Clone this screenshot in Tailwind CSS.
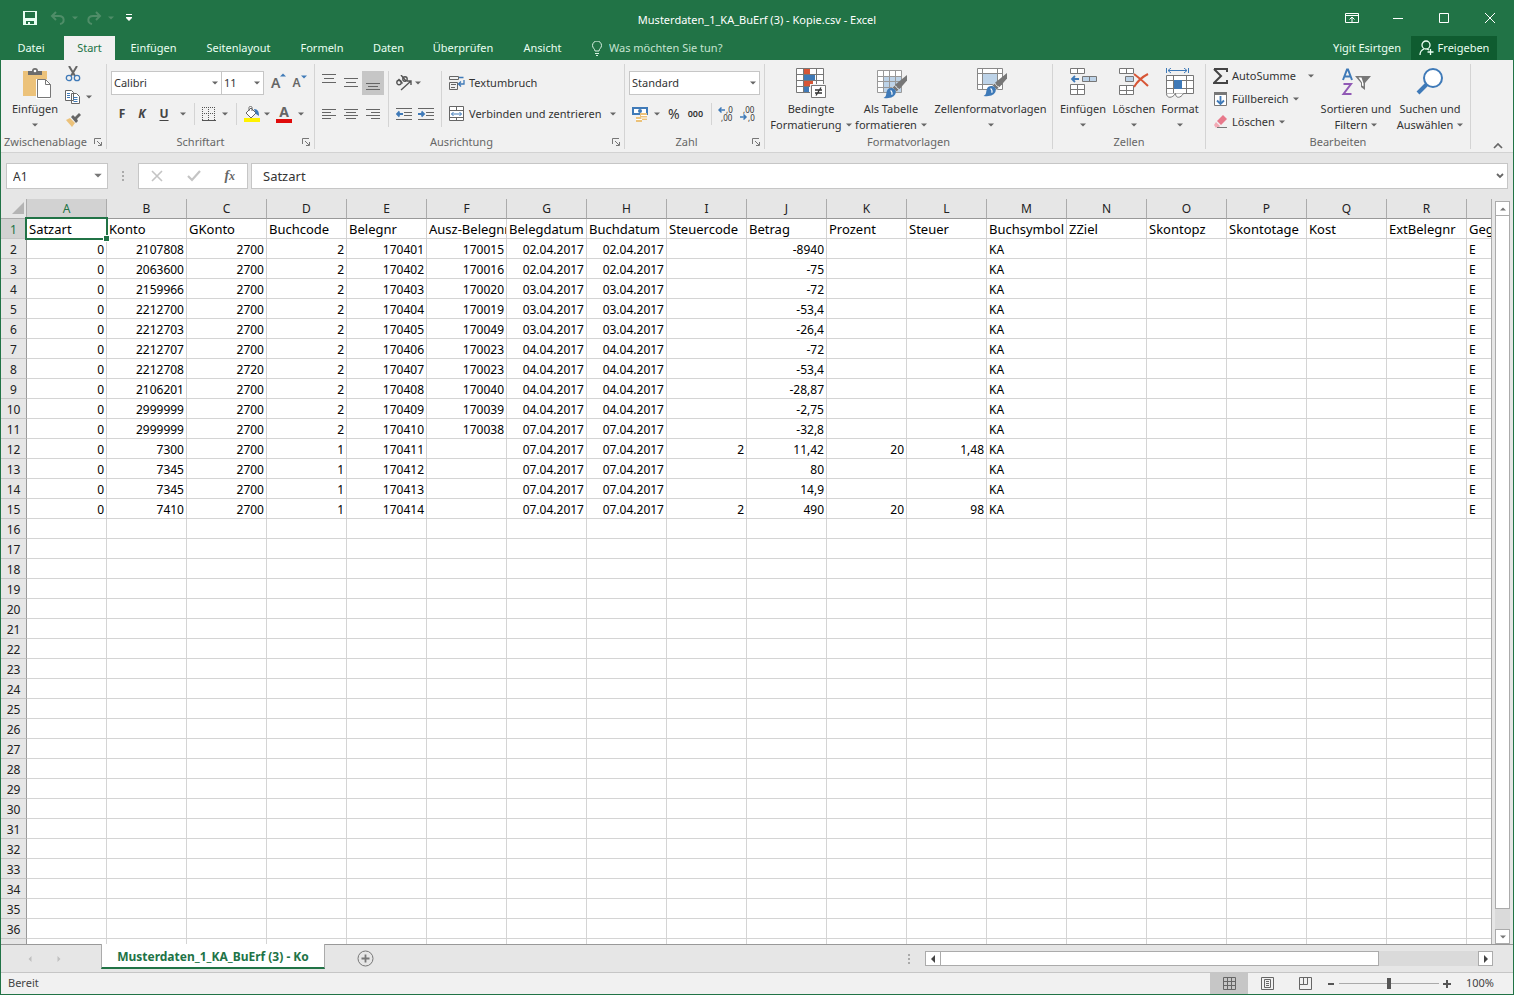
<!DOCTYPE html>
<html lang="de">
<head>
<meta charset="utf-8">
<title>Musterdaten_1_KA_BuErf (3) - Kopie.csv - Excel</title>
<script src="https://cdn.jsdelivr.net/npm/@tailwindcss/browser@4"></script>
</head>
<body class="h-screen overflow-hidden font-['Noto_Sans','Open_Sans',sans-serif] text-[11px] text-[#333]">
<svg class="hidden">
  <symbol id="caret" viewBox="0 0 6 4"><path d="M0 0.5h6L3 3.5z" fill="currentColor"/></symbol>
  <symbol id="launch" viewBox="0 0 8 8"><path d="M.5 6V.5H7M3 3l4 4M7.500 4v3.500H4" fill="none" stroke="#777"/></symbol>
  <symbol id="brush" viewBox="0 0 22 22"><path d="M22 0v5l-7 8-4-4z" fill="#777"/><path d="M10.500 9.500l4 4-2 2-4-4z" fill="#777" stroke="#f1f1f1" stroke-width=".6"/><path d="M7.500 12c3 0 5 2 4 5-1 3-5 5-11 4 3-1 2-3 3-6 .7-2 2-3 4-3z" fill="#3f7ab8"/><path d="M7 14c1 1 2 2 1 4" stroke="#fff" fill="none"/></symbol>
</svg>
<div class="flex h-full flex-col border-x border-b border-[#217346] bg-[#e6e6e6]">

  <!-- Title bar -->
  <header class="flex h-9 shrink-0 items-center bg-[#217346] text-white">
    <div class="flex w-[420px] items-center pl-[21px]">
      <button aria-label="Speichern"><svg class="size-4" viewBox="0 0 16 16"><path d="M1 1h14v14H1z" fill="#e8fff2"/><path d="M3 2h10v6H3zM4 11h8v3H4z" fill="#217346"/><path d="M6 12h2v2H6z" fill="#e8fff2"/></svg></button>
      <button aria-label="Rückgängig" class="ml-3 text-[#4f8d68]"><svg class="h-3.5 w-4" viewBox="0 0 16 14" fill="none" stroke="currentColor" stroke-width="2"><path d="M6 1L2 5l4 4M2 5h7c6 0 6 7 1 8"/></svg></button>
      <svg class="ml-1.5 h-1 w-1.5 text-[#4f8d68]"><use href="#caret"/></svg>
      <button aria-label="Wiederholen" class="ml-2 text-[#4f8d68]"><svg class="h-3.5 w-4" viewBox="0 0 16 14" fill="none" stroke="currentColor" stroke-width="2"><path d="M10 1l4 4-4 4M14 5H7c-6 0-6 7-1 8"/></svg></button>
      <svg class="ml-1.5 h-1 w-1.5 text-[#4f8d68]"><use href="#caret"/></svg>
      <button aria-label="Symbolleiste anpassen" class="ml-3"><svg class="h-2 w-1.5" viewBox="0 0 6 8" fill="#fff"><path d="M0 0h6v1H0zM0 3h6v1L3 7 0 4z"/></svg></button>
    </div>
    <h1 class="flex-1 pt-1 text-center whitespace-nowrap">Musterdaten_1_KA_BuErf (3) - Kopie.csv - Excel</h1>
    <div class="flex w-[420px] items-center justify-end gap-8 pr-4">
      <button aria-label="Menüband-Anzeigeoptionen"><svg class="h-3 w-3.5" viewBox="0 0 14 12" fill="none" stroke="#fff"><path d="M.5 1.500h13v9H.5zM.5 3.500h13M7 10V5M4.500 7.500L7 5l2.500 2.500"/></svg></button>
      <button aria-label="Minimieren"><svg class="h-3 w-3.5" viewBox="0 0 14 12"><path d="M2 6.500h10" stroke="#fff"/></svg></button>
      <button aria-label="Maximieren"><svg class="h-3 w-3.5" viewBox="0 0 14 12"><path d="M2.500 1.500h9v9h-9z" stroke="#fff" fill="none"/></svg></button>
      <button aria-label="Schließen"><svg class="h-3 w-3.5" viewBox="0 0 14 12"><path d="M2 1l10 10M12 1L2 11" stroke="#fff"/></svg></button>
    </div>
  </header>

  <!-- Ribbon tabs -->
  <nav class="flex h-6 shrink-0 bg-[#217346] text-[#eafff2]">
    <button class="mr-[3px] w-[60px]">Datei</button>
    <button class="w-[51px] bg-[#f1f1f1] text-[#217346]">Start</button>
    <button class="w-[77px]">Einfügen</button>
    <button class="w-[93px]">Seitenlayout</button>
    <button class="w-[74px]">Formeln</button>
    <button class="w-[59px]">Daten</button>
    <button class="w-[90px]">Überprüfen</button>
    <button class="w-[69px]">Ansicht</button>
    <label class="ml-3.5 flex items-center gap-1.5">
      <svg class="h-[15px] w-3" viewBox="0 0 12 15" fill="none" stroke="#d9f2e3"><path d="M4 10c0-2-2.500-3-2.500-5.500a4.500 4.500 0 019 0C10.500 7 8 8 8 10zM4 12.500h4M5 14.500h2"/></svg>
      <input class="w-40 bg-transparent outline-none placeholder:text-[#c5e3d1]" placeholder="Was möchten Sie tun?" aria-label="Was möchten Sie tun?">
    </label>
    <span class="ml-auto flex items-center pr-2.5">Yigit Esirtgen</span>
    <button class="mr-4 flex w-[86px] items-center justify-center gap-1 bg-[#0f5c30]"><svg class="h-4 w-[15px]" viewBox="0 0 15 16" fill="none" stroke="#eafff2" stroke-width="1.300"><circle cx="7" cy="5" r="4"/><path d="M1 15c0-3 1.500-5 4-6M8 9l2 1M11.500 9v6M8.500 12h6"/></svg>Freigeben</button>
  </nav>

  <!-- Ribbon -->
  <section class="flex h-[93px] shrink-0 border-b border-[#d2d2d2] bg-[#f1f1f1] pt-1 pb-[3px] text-[#333]">
    <!-- Zwischenablage -->
    <div class="flex w-[106px] shrink-0 flex-col border-r border-[#d4d4d4]">
      <div class="flex flex-1">
        <button class="flex w-[68px] flex-col items-center pt-1 leading-4">
          <svg class="ml-1 h-[31px] w-7" viewBox="0 0 28 31"><path d="M0 3h24v25H0z" fill="#ecc27a"/><path d="M5 3h4a3 3 0 016 0h4v4H5z" fill="#6d6d6d"/><circle cx="12" cy="3" r="1.300" fill="#fff"/><path d="M13 11h10l5 5v15H13z" fill="#fff"/><path d="M14.500 11.500h8l5 5v13h-13zM22.500 11.500v5h5" fill="#fff" stroke="#777"/></svg>
          <span class="mt-0.5">Einfügen</span>
          <svg class="mt-1.5 h-1 w-1.5 text-[#666]"><use href="#caret"/></svg>
        </button>
        <div class="flex flex-col gap-2 pt-0.5 -ml-1">
          <button aria-label="Ausschneiden"><svg class="size-4" viewBox="0 0 16 16" fill="none"><path d="M4 0l6 10M12 0L6 10" stroke="#666" stroke-width="2"/><circle cx="4" cy="12" r="2.700" stroke="#3f7ab8" stroke-width="1.300"/><circle cx="12" cy="12" r="2.700" stroke="#3f7ab8" stroke-width="1.300"/></svg></button>
          <button aria-label="Kopieren" class="flex items-center gap-[5px]"><svg class="h-3.5 w-4" viewBox="0 0 16 14" fill="#fff" stroke="#666"><path d="M.5.5h6l2 2v8h-8zM6.500 3.500h5l3 3v7h-8z"/><path d="M2 3.500h3M2 5.500h3M2 7.500h3M8.500 7.500h4M8.500 9.500h4M8.500 11.500h4" stroke="#3f7ab8"/></svg><svg class="h-1 w-1.5 text-[#666]"><use href="#caret"/></svg></button>
          <button aria-label="Format übertragen"><svg class="size-4" viewBox="0 0 16 16"><path d="M1 8l4-2 5 5-3 4z" fill="#ecc27a"/><path d="M6 5l2-2 2 2 4-4 2 2-4 4 1 2-2 2z" fill="#666"/></svg></button>
        </div>
      </div>
      <div class="flex h-3.5 items-center justify-between gap-1 pr-1 pl-[3px] text-[#666]"><span>Zwischenablage</span><button aria-label="Dialog Zwischenablage"><svg class="size-2"><use href="#launch"/></svg></button></div>
    </div>
    <!-- Schriftart -->
    <div class="flex w-[208px] shrink-0 flex-col border-r border-[#d4d4d4]">
      <div class="flex flex-1 flex-col gap-[7px] pt-[7px] pl-1">
        <div class="flex h-6 items-center">
          <div class="relative h-6 w-[111px]"><select aria-label="Schriftart" class="h-full w-full appearance-none border border-[#c6c6c6] bg-white px-0.5"><option>Calibri</option></select><svg class="pointer-events-none absolute top-2.5 right-1 h-1 w-1.5 text-[#666]"><use href="#caret"/></svg></div>
          <div class="relative h-6 w-[42px]"><select aria-label="Schriftgrad" class="h-full w-full appearance-none border border-l-0 border-[#c6c6c6] bg-white px-0.5"><option>11</option></select><svg class="pointer-events-none absolute top-2.5 right-1 h-1 w-1.5 text-[#666]"><use href="#caret"/></svg></div>
          <button aria-label="Schriftgrad vergrößern" class="ml-[7px] flex text-sm font-semibold text-[#666]">A<svg class="h-1 w-1.5 rotate-180 text-[#3f7ab8]"><use href="#caret"/></svg></button>
          <button aria-label="Schriftgrad verkleinern" class="ml-1.5 flex text-xs font-semibold text-[#666]">A<svg class="h-1 w-1.5 text-[#3f7ab8]"><use href="#caret"/></svg></button>
        </div>
        <div class="flex h-6 items-center text-xs text-[#444]">
          <button class="ml-[3px] w-4 font-bold">F</button>
          <button class="ml-1 w-4 font-bold italic">K</button>
          <button class="ml-1.5 w-4 font-bold underline underline-offset-2">U</button>
          <svg class="ml-2 h-1 w-1.5 text-[#666]"><use href="#caret"/></svg>
          <span class="ml-2 h-[22px] w-px bg-[#d4d4d4]"></span>
          <button aria-label="Rahmenlinien" class="ml-[7px]"><svg class="size-3.5" viewBox="0 0 14 14" fill="none" stroke="#555"><path d="M0 .5h14M0 6.500h14M.5 0v13M6.500 0v13M12.500 0v13" stroke-dasharray="1 1"/><path d="M0 13.500h14"/></svg></button>
          <svg class="ml-1.5 h-1 w-1.5 text-[#666]"><use href="#caret"/></svg>
          <span class="ml-2 h-[22px] w-px bg-[#d4d4d4]"></span>
          <button aria-label="Füllfarbe" class="ml-[7px]"><svg class="size-4" viewBox="0 0 16 16"><path d="M0 12h16v4H0z" fill="#fff200"/><path d="M7 2l5 5-5 5-5-5zM5 5V1.500C5 0 8 0 8 1.500V5" fill="#fff" stroke="#666"/><path d="M10 3c4 0 5 3 5 7l-3-2z" fill="#3f7ab8"/></svg></button>
          <svg class="ml-1 h-1 w-1.5 text-[#666]"><use href="#caret"/></svg>
          <button aria-label="Schriftfarbe" class="ml-1.5 h-[18px] w-4 border-b-4 border-[#e00b0b] text-sm leading-[14px] font-bold text-[#666]">A</button>
          <svg class="ml-1.5 h-1 w-1.5 text-[#666]"><use href="#caret"/></svg>
        </div>
      </div>
      <div class="flex h-3.5 items-center pr-1 text-[#666]"><span class="flex-1 pr-2 text-center">Schriftart</span><button aria-label="Dialog Schriftart"><svg class="size-2"><use href="#launch"/></svg></button></div>
    </div>
    <!-- Ausrichtung -->
    <div class="flex w-[310px] shrink-0 flex-col border-r border-[#d4d4d4]">
      <div class="flex flex-1 pt-[7px]">
        <div class="mb-2 flex w-[74px] flex-col gap-[7px] border-r border-[#d4d4d4] pl-[3px]">
          <div class="flex h-6">
            <button aria-label="Oben ausrichten" class="flex w-[22px] justify-center"><svg class="h-[22px] w-3.5" viewBox="0 0 14 22" stroke="#666"><path d="M0 3.500h14M2 7.500h10M0 11.500h14"/></svg></button>
            <button aria-label="Zentriert ausrichten" class="flex w-[22px] justify-center"><svg class="h-[22px] w-3.5" viewBox="0 0 14 22" stroke="#666"><path d="M0 7.500h14M2 11.500h10M0 15.500h14"/></svg></button>
            <button aria-label="Unten ausrichten" class="flex w-[22px] justify-center bg-[#c6c6c6]"><svg class="h-[22px] w-3.5" viewBox="0 0 14 22" stroke="#666"><path d="M0 12.500h14M2 15.500h10M0 18.500h14"/></svg></button>
          </div>
          <div class="flex h-6 items-center">
            <button aria-label="Linksbündig" class="flex w-[22px] justify-center"><svg class="h-3 w-3.5" viewBox="0 0 14 12" stroke="#666"><path d="M0 1.500h14M0 4.500h9M0 7.500h14M0 10.500h9"/></svg></button>
            <button aria-label="Zentriert" class="flex w-[22px] justify-center"><svg class="h-3 w-3.5" viewBox="0 0 14 12" stroke="#666"><path d="M0 1.500h14M2 4.500h10M0 7.500h14M2 10.500h10"/></svg></button>
            <button aria-label="Rechtsbündig" class="flex w-[22px] justify-center"><svg class="h-3 w-3.5" viewBox="0 0 14 12" stroke="#666"><path d="M0 1.500h14M5 4.500h9M0 7.500h14M5 10.500h9"/></svg></button>
          </div>
        </div>
        <div class="mb-2 flex w-[53px] flex-col gap-[7px] border-r border-[#d4d4d4] pl-[7px]">
          <button aria-label="Ausrichtung" class="flex h-6 items-center gap-[3px]"><svg class="size-4" viewBox="0 0 16 16" fill="none" stroke="#555" stroke-width="1.400"><circle cx="3" cy="7.500" r="2.200"/><path d="M2.500 4l4 4.500M5 0l5 6"/><circle cx="9" cy="4" r="2.200"/><path d="M5 15l10-9M15 10V6h-4"/></svg><svg class="h-1 w-1.5 text-[#666]"><use href="#caret"/></svg></button>
          <div class="flex h-6 items-center gap-1.5">
            <button aria-label="Einzug verkleinern"><svg class="h-3 w-4" viewBox="0 0 16 12" stroke="#666" fill="none"><path d="M0 .5h16M8 4.500h8M8 7.500h8M0 11.500h16"/><path d="M1 6h6M3.500 3.500L1 6l2.500 2.500" stroke="#3f7ab8" stroke-width="1.800"/></svg></button>
            <button aria-label="Einzug vergrößern"><svg class="h-3 w-4" viewBox="0 0 16 12" stroke="#666" fill="none"><path d="M0 .5h16M8 4.500h8M8 7.500h8M0 11.500h16"/><path d="M0 6h6M3.500 3.500L6 6 3.500 8.500" stroke="#3f7ab8" stroke-width="1.800"/></svg></button>
          </div>
        </div>
        <div class="flex flex-1 flex-col gap-[7px] pl-[7px]">
          <button class="flex h-6 items-center gap-1"><svg class="size-4" viewBox="0 0 16 16" fill="none" stroke="#666"><path d="M.5 1.500h9v3h-9zM.5 7.500h8v7h-8zM2 9.500h5M2 12.500h4"/><path d="M10 2.500h4.500M15 5v4h-5M12 6.500L9.500 9l2.500 2.500" stroke="#3f7ab8" stroke-width="1.300"/></svg>Textumbruch</button>
          <button class="flex h-6 items-center gap-1 whitespace-nowrap"><svg class="size-4 shrink-0" viewBox="0 0 16 16" fill="#fff" stroke="#666"><path d="M.5.5h14v14H.5zM.5 4.500h14M.5 11.500h14M7.500.5v4M7.500 11.500v3"/><path d="M2.500 8h10M4.500 6l-2 2 2 2M10.500 6l2 2-2 2" fill="none" stroke="#3f7ab8"/></svg><span class="w-[137px] text-left">Verbinden und zentrieren</span><svg class="h-1 w-1.5 text-[#666]"><use href="#caret"/></svg></button>
        </div>
      </div>
      <div class="flex h-3.5 items-center pr-1 text-[#666]"><span class="flex-1 pr-1 text-center">Ausrichtung</span><button aria-label="Dialog Ausrichtung"><svg class="size-2"><use href="#launch"/></svg></button></div>
    </div>
    <!-- Zahl -->
    <div class="flex w-[140px] shrink-0 flex-col border-r border-[#d4d4d4]">
      <div class="flex flex-1 flex-col gap-[7px] pt-[7px] pl-1">
        <div class="relative h-6 w-[131px]"><select aria-label="Zahlenformat" class="h-full w-full appearance-none border border-[#c6c6c6] bg-white px-0.5"><option>Standard</option></select><svg class="pointer-events-none absolute top-2.5 right-1 h-1 w-1.5 text-[#666]"><use href="#caret"/></svg></div>
        <div class="flex h-6 items-center">
          <button aria-label="Buchhaltungszahlenformat" class="ml-[3px]"><svg class="size-4" viewBox="0 0 16 16"><path d="M0 1h16v8H0z" fill="#3f7ab8"/><path d="M2 3h12v4H2z" fill="#fff"/><circle cx="8" cy="5" r="2" fill="#3f7ab8"/><path d="M8 7h7v7H8zM4 11h6v5H4z" fill="#ecc27a"/><path d="M9 9.500h6M9 12h6M4 13.500h6" stroke="#fff"/></svg></button>
          <svg class="ml-1.5 h-1 w-1.5 text-[#666]"><use href="#caret"/></svg>
          <button aria-label="Prozentformat" class="ml-2 text-sm">%</button>
          <button aria-label="1.000er-Trennzeichen" class="ml-2 text-[9px] font-semibold">000</button>
          <span class="ml-2 h-[22px] w-px bg-[#d4d4d4]"></span>
          <button aria-label="Dezimalstelle hinzufügen" class="ml-1.5"><svg class="size-4" viewBox="0 0 16 16"><path d="M1 4h6M3.500 1.500L1 4l2.500 2.500" stroke="#3f7ab8" fill="none" stroke-width="1.500"/><text x="8" y="7" font-size="8" fill="#333">,0</text><text x="3" y="15" font-size="8" fill="#333">,00</text></svg></button>
          <button aria-label="Dezimalstelle entfernen" class="ml-1.5"><svg class="size-4" viewBox="0 0 16 16"><path d="M0 11h6M3.500 8.500L6 11l-2.500 2.500" stroke="#3f7ab8" fill="none" stroke-width="1.500"/><text x="3" y="7" font-size="8" fill="#333">,00</text><text x="8" y="15" font-size="8" fill="#333">,0</text></svg></button>
        </div>
      </div>
      <div class="flex h-3.5 items-center pr-1 text-[#666]"><span class="flex-1 pr-1 text-center">Zahl</span><button aria-label="Dialog Zahl"><svg class="size-2"><use href="#launch"/></svg></button></div>
    </div>
    <!-- Formatvorlagen -->
    <div class="flex w-[288px] shrink-0 flex-col border-r border-[#d4d4d4]">
      <div class="flex flex-1 pt-1 pl-1 leading-4 whitespace-nowrap">
        <button class="flex w-[84px] flex-col items-center">
          <svg class="h-[31px] w-8" viewBox="0 0 32 31"><path d="M1.500.5h27v24h-27z" fill="#fff"/><path d="M9 1h6v5H9zM9 13h9v5H9z" fill="#d75636"/><path d="M9 7h11v5H9zM9 19h5v5H9z" fill="#3f7ab8"/><path d="M1.500.5h27v24h-27zM1.500 6.500h27M1.500 12.500h27M1.500 18.500h27M8.500.5v24M21.500.5v24" fill="none" stroke="#777"/><path d="M15 16h17v15H15z" fill="#f1f1f1"/><path d="M16.500 17.500h14v12h-14z" fill="#fff" stroke="#777"/><path d="M20 22h7M20 25h7M26 19.500l-5 8" stroke="#333" stroke-width="1.300"/></svg>
          <span class="mt-0.5">Bedingte</span><span class="flex items-center gap-1">Formatierung<svg class="h-1 w-1.5 text-[#666]"><use href="#caret"/></svg></span>
        </button>
        <button class="flex w-[76px] flex-col items-center">
          <svg class="h-[31px] w-8" viewBox="0 0 32 31"><path d="M2.500 2.500h24v22h-24z" fill="#fff"/><path d="M8.500 8.500h18v16h-18z" fill="#bdd3e8"/><path d="M2.500 2.500h24v22h-24zM2.500 8.500h24M2.500 13.500h24M2.500 19.500h24M8.500 2.500v22M14.500 2.500v22M20.500 2.500v22" fill="none" stroke="#999"/><svg x="8" y="7" width="24" height="24"><use href="#brush"/></svg></svg>
          <span class="mt-0.5">Als Tabelle</span><span class="flex items-center gap-1">formatieren<svg class="h-1 w-1.5 text-[#666]"><use href="#caret"/></svg></span>
        </button>
        <button class="flex flex-1 flex-col items-center">
          <svg class="h-[31px] w-8" viewBox="0 0 32 31"><path d="M2.500.5h25v21h-25z" fill="#fff"/><path d="M7.500 5.500h15v11h-15z" fill="#bdd3e8"/><path d="M2.500.5h25v21h-25zM7.500.5v21M22.500.5v21M2.500 5.500h25M2.500 16.500h25" fill="none" stroke="#888"/><svg x="8" y="5" width="24" height="24"><use href="#brush"/></svg></svg>
          <span class="mt-0.5">Zellenformatvorlagen</span><svg class="mt-1.5 h-1 w-1.5 text-[#666]"><use href="#caret"/></svg>
        </button>
      </div>
      <div class="h-3.5 text-center leading-[14px] text-[#666]">Formatvorlagen</div>
    </div>
    <!-- Zellen -->
    <div class="flex w-[153px] shrink-0 flex-col border-r border-[#d4d4d4]">
      <div class="flex flex-1 pt-1 pl-1 leading-4">
        <button class="flex w-[52px] flex-col items-center"><svg class="h-[31px] w-7" viewBox="0 0 28 31" fill="#fff" stroke="#777"><path d="M1.500.5h14v5h-14zM8.500.5v5M1.500 16.500h14v10h-14zM8.500 16.500v10M1.500 21.500h14"/><path d="M13.500 8.500h14v5h-14zM20.500 8.500v5" fill="#bdd3e8"/><path d="M3 11h7M6 8l-3 3 3 3" fill="none" stroke="#3f7ab8" stroke-width="1.800"/></svg><span class="mt-0.5">Einfügen</span><svg class="mt-1.5 h-1 w-1.5 text-[#666]"><use href="#caret"/></svg></button>
        <button class="flex w-[50px] flex-col items-center"><svg class="h-[31px] w-[30px]" viewBox="0 0 30 31" fill="#fff" stroke="#777"><path d="M.5.5h14v5H.5zM7.500.5v5M.5 17.500h14v9H.5zM7.500 17.500v9M.5 22.500h14"/><path d="M6.500 8.500h8v5h-8z" fill="#bdd3e8"/><path d="M15 6c4 3 9 7 14 12M29 6c-6 3-11 8-14 13" fill="none" stroke="#d75636" stroke-width="2"/></svg><span class="mt-0.5">Löschen</span><svg class="mt-1.5 h-1 w-1.5 text-[#666]"><use href="#caret"/></svg></button>
        <button class="flex w-[42px] flex-col items-center"><svg class="h-[31px] w-[30px]" viewBox="0 0 30 31" fill="#fff" stroke="#777"><path d="M1.500 7.500h27v18h-27zM8.500 7.500v18M21.500 7.500v18M1.500 12.500h27M1.500 20.500h27"/><path d="M1.500 25.500c0 5 6 5 9 0c0 5 5 5 8 0" fill="#fff"/><path d="M9 12h8v9H9z" fill="#3f7ab8" stroke="none"/><path d="M1.500 0v5M23.500 0v5M3 2.500h19M6 0L3 2.500 6 5M19 0l3 2.500L19 5" fill="none" stroke="#3f7ab8"/></svg><span class="mt-0.5">Format</span><svg class="mt-1.5 h-1 w-1.5 text-[#666]"><use href="#caret"/></svg></button>
      </div>
      <div class="h-3.5 text-center leading-[14px] text-[#666]">Zellen</div>
    </div>
    <!-- Bearbeiten -->
    <div class="flex w-[265px] shrink-0 flex-col border-r border-[#d4d4d4]">
      <div class="flex flex-1 leading-4 whitespace-nowrap">
        <div class="flex w-[111px] flex-col pl-[7px]">
          <button class="flex h-[23px] items-center gap-1"><svg class="h-4 w-[15px]" viewBox="0 0 15 16"><path d="M1 1h13v3M14 12v3H1l7-7-7-7" fill="none" stroke="#444" stroke-width="2"/></svg>AutoSumme<svg class="ml-2 h-1 w-1.5 text-[#666]"><use href="#caret"/></svg></button>
          <button class="flex h-[23px] items-center gap-1"><svg class="h-4 w-[15px]" viewBox="0 0 15 16"><path d="M1.500 2.500h12v12h-12z" fill="#fff" stroke="#777"/><path d="M1 1h13v3H1z" fill="#777"/><path d="M7.500 5v8M4 9.500L7.500 13 11 9.500" fill="none" stroke="#3f7ab8" stroke-width="1.800"/></svg>Füllbereich<svg class="h-1 w-1.5 text-[#666]"><use href="#caret"/></svg></button>
          <button class="flex h-[23px] items-center gap-1"><svg class="h-4 w-[15px]" viewBox="0 0 15 16"><path d="M4 7l6-6 4 4-6 6z" fill="#e8798b"/><path d="M3 8l4 4-1.500 1.500h-3L1 11z" fill="#f3a9b4"/><path d="M4 13.500h10" stroke="#777"/></svg>Löschen<svg class="h-1 w-1.5 text-[#666]"><use href="#caret"/></svg></button>
        </div>
        <button class="flex w-[78px] flex-col items-center pt-1"><svg class="h-[31px] w-[30px]" viewBox="0 0 30 31"><path d="M2 12L6 1.500h1L11 12M3.500 8.500h6" fill="none" stroke="#3f7ab8" stroke-width="2"/><path d="M2.500 16H10L2.500 26h8" fill="none" stroke="#9159b5" stroke-width="2"/><path d="M14 8h16l-6 7v7l-4-3v-4z" fill="#777"/><path d="M17.500 9.500h3l2 6v3l-1.500-1v-3z" fill="#fff"/></svg><span class="mt-0.5">Sortieren und</span><span class="flex items-center gap-1">Filtern<svg class="h-1 w-1.5 text-[#666]"><use href="#caret"/></svg></span></button>
        <button class="flex w-[70px] flex-col items-center pt-1"><svg class="h-[31px] w-7" viewBox="0 0 28 31"><path d="M11 16L2 25" stroke="#3f7ab8" stroke-width="4"/><circle cx="17" cy="10" r="9" fill="#fff" stroke="#3f7ab8" stroke-width="2"/></svg><span class="mt-0.5">Suchen und</span><span class="flex items-center gap-1">Auswählen<svg class="h-1 w-1.5 text-[#666]"><use href="#caret"/></svg></span></button>
      </div>
      <div class="h-3.5 text-center leading-[14px] text-[#666]">Bearbeiten</div>
    </div>
    <button aria-label="Menüband reduzieren" class="mt-auto ml-auto pr-2.5"><svg class="h-1.5 w-2.5" viewBox="0 0 10 6"><path d="M1 5l4-4 4 4" fill="none" stroke="#666" stroke-width="1.700"/></svg></button>
  </section>

  <!-- Formula bar -->
  <section class="flex h-[46px] shrink-0 items-start pt-2.5 pr-[5px] pl-[5px] text-xs">
    <div class="relative h-[26px] w-[102px]"><input aria-label="Namenfeld" value="A1" class="h-full w-full border border-[#c6c6c6] bg-white px-1.5 outline-none"><svg class="pointer-events-none absolute top-2.5 right-1.5 h-[5px] w-2 text-[#777]"><use href="#caret"/></svg></div>
    <svg class="ml-3.5 h-[26px] w-0.5" viewBox="0 0 2 26" fill="#aaa"><path d="M0 8h2v2H0zM0 12h2v2H0zM0 16h2v2H0z"/></svg>
    <div class="ml-3.5 flex h-[26px] w-[110px] items-center justify-around border border-[#c6c6c6] bg-white">
      <button aria-label="Abbrechen"><svg class="size-3" viewBox="0 0 12 12"><path d="M1 1l10 10M11 1L1 11" stroke="#c4c4c4" stroke-width="1.600"/></svg></button>
      <button aria-label="Eingeben"><svg class="h-3 w-3.5" viewBox="0 0 14 12"><path d="M1 6l4 4 8-9" stroke="#c4c4c4" stroke-width="2.200" fill="none"/></svg></button>
      <button aria-label="Funktion einfügen" class="font-['Liberation_Serif',serif] text-sm leading-4 font-bold text-[#666] italic">f<span class="text-xs">x</span></button>
    </div>
    <div class="relative ml-[3px] h-[26px] flex-1"><input aria-label="Bearbeitungsleiste" value="Satzart" class="h-full w-full border border-[#c6c6c6] bg-white px-[11px] text-[13px] outline-none"><svg class="pointer-events-none absolute top-2.5 right-1 h-1.5 w-2" viewBox="0 0 8 6"><path d="M1 1l3 3 3-3" fill="none" stroke="#666" stroke-width="1.800"/></svg></div>
  </section>

  <!-- Worksheet -->
  <main class="flex min-h-0 flex-1">
    <div class="min-w-0 flex-1 overflow-hidden border-r border-[#ababab]">
      <table id="sheet" class="w-[1546px] table-fixed border-separate border-spacing-0 bg-white text-xs leading-[19px] text-black"></table>
    </div>
    <div class="flex w-[21px] flex-col items-center pt-0.5">
      <button aria-label="Nach oben" class="flex size-[15px] items-center justify-center border border-[#ababab] bg-white text-[#777]"><svg class="h-1 w-1.5 rotate-180"><use href="#caret"/></svg></button>
      <div class="w-[15px] flex-1 border-x border-b border-[#ababab] bg-white"></div>
      <div class="h-5 w-[15px] bg-[#dadada]"></div>
      <button aria-label="Nach unten" class="flex size-[15px] items-center justify-center border border-[#ababab] bg-white text-[#777]"><svg class="h-1 w-1.5"><use href="#caret"/></svg></button>
    </div>
  </main>

  <!-- Sheet tabs -->
  <section class="flex h-[29px] shrink-0 items-start border-b border-[#c6c6c6]">
    <div class="flex h-7 w-[100px] items-center gap-[23px] border-t border-[#999] pl-[26px] text-[#c0c0c0]">
      <button aria-label="Vorheriges Blatt"><svg class="h-1 w-1.5 rotate-90"><use href="#caret"/></svg></button>
      <button aria-label="Nächstes Blatt"><svg class="h-1 w-1.5 -rotate-90"><use href="#caret"/></svg></button>
    </div>
    <button class="h-[25px] w-[224px] border-x border-b-2 border-x-[#ababab] border-b-[#217346] bg-white pt-0.5 text-xs font-bold whitespace-nowrap text-[#217346]">Musterdaten_1_KA_BuErf (3) - Ko</button>
    <div class="flex h-7 flex-1 items-center border-t border-[#999]">
      <button aria-label="Neues Blatt" class="ml-8"><svg class="size-[17px]" viewBox="0 0 17 17" fill="none" stroke="#777"><circle cx="8.500" cy="8.500" r="7.500"/><path d="M8.500 4.500v8M4.500 8.500h8" stroke-width="1.800"/></svg></button>
      <svg class="ml-auto h-3 w-0.5" viewBox="0 0 2 12" fill="#aaa"><path d="M0 1h2v2H0zM0 5h2v2H0zM0 9h2v2H0z"/></svg>
      <div class="ml-[15px] flex h-[15px] w-[568px]">
        <button aria-label="Nach links" class="flex w-4 items-center justify-center border border-[#ababab] bg-white text-[#444]"><svg class="h-1.5 w-2 rotate-90"><use href="#caret"/></svg></button>
        <div class="w-[438px] border-y border-r border-[#ababab] bg-white"></div>
        <div class="flex-1 bg-[#dadada]"></div>
        <button aria-label="Nach rechts" class="flex w-[15px] items-center justify-center border border-[#ababab] bg-white text-[#444]"><svg class="h-1.5 w-2 -rotate-90"><use href="#caret"/></svg></button>
      </div>
      <span class="w-5"></span>
    </div>
  </section>

  <!-- Status bar -->
  <footer class="flex h-[21px] shrink-0 items-center bg-[#f1f1f1] text-[#444]">
    <span class="pl-[7px]">Bereit</span>
    <button aria-label="Normal" class="ml-auto flex h-full w-[38px] items-center justify-center bg-[#c6c6c6]"><svg class="size-[13px]" viewBox="0 0 13 13" fill="none" stroke="#666"><path d="M.5.5h12v12H.5zM4.500.5v12M8.500.5v12M.5 4.500h12M.5 8.500h12"/></svg></button>
    <button aria-label="Seitenlayout" class="flex h-full w-[38px] items-center justify-center"><svg class="size-[13px]" viewBox="0 0 13 13" fill="none" stroke="#666"><path d="M.5.5h12v12H.5zM3.500 2.500h6v8h-6zM5 4.500h3M5 6.500h3M5 8.500h3"/></svg></button>
    <button aria-label="Umbruchvorschau" class="flex h-full w-[38px] items-center justify-center"><svg class="size-[13px]" viewBox="0 0 13 13" fill="none" stroke="#666"><path d="M.5.5h12v12H.5zM4.500.5v7M8.500.5v7h-8"/></svg></button>
    <button aria-label="Verkleinern" class="ml-1 h-0.5 w-1.5 bg-[#555]"></button>
    <input type="range" aria-label="Zoom" value="50" class="ml-[5px] h-3 w-[100px] appearance-none bg-transparent [&::-webkit-slider-runnable-track]:h-px [&::-webkit-slider-runnable-track]:bg-[#aaa] [&::-webkit-slider-thumb]:-mt-[5px] [&::-webkit-slider-thumb]:h-[11px] [&::-webkit-slider-thumb]:w-1 [&::-webkit-slider-thumb]:appearance-none [&::-webkit-slider-thumb]:bg-[#555]">
    <button aria-label="Vergrößern" class="ml-1"><svg class="size-2" viewBox="0 0 8 8"><path d="M0 4h8M4 0v8" stroke="#555" stroke-width="2"/></svg></button>
    <span class="w-[62px] pr-[19px] text-right">100%</span>
  </footer>
</div>

<script>
const names = ['Satzart','Konto','GKonto','Buchcode','Belegnr','Ausz-Belegnr','Belegdatum','Buchdatum','Steuercode','Betrag','Prozent','Steuer','Buchsymbol','ZZiel','Skontopz','Skontotage','Kost','ExtBelegnr','Gegenbuchkz'];
const rows = `2107808|2700|2|170401|170015|02.04.2017||-8940||
2063600|2700|2|170402|170016|02.04.2017||-75||
2159966|2700|2|170403|170020|03.04.2017||-72||
2212700|2700|2|170404|170019|03.04.2017||-53,4||
2212703|2700|2|170405|170049|03.04.2017||-26,4||
2212707|2700|2|170406|170023|04.04.2017||-72||
2212708|2720|2|170407|170023|04.04.2017||-53,4||
2106201|2700|2|170408|170040|04.04.2017||-28,87||
2999999|2700|2|170409|170039|04.04.2017||-2,75||
2999999|2700|2|170410|170038|07.04.2017||-32,8||
7300|2700|1|170411||07.04.2017|2|11,42|20|1,48
7345|2700|1|170412||07.04.2017||80||
7345|2700|1|170413||07.04.2017||14,9||
7410|2700|1|170414||07.04.2017|2|490|20|98`.split('\n').map(line => {
  const v = line.split('|');
  return ['0', ...v.slice(0, 6), v[5], ...v.slice(6), 'KA', '', '', '', '', '', 'E'];
});
let html = '<colgroup><col class="w-[26px]">' + '<col class="w-20">'.repeat(19) + '</colgroup><thead><tr><th class="h-5 border-r border-b border-r-[#ababab] border-b-[#ababab] bg-[#e6e6e6] p-0 align-bottom"><svg class="mr-0.5 mb-1 ml-auto size-3" viewBox="0 0 12 12"><path d="M12 0v12H0z" fill="#b4b4b4"/></svg></th>';
names.forEach((n, i) => {
  html += `<th class="h-5 border-r border-b p-0 font-normal ${i === 0 ? 'border-r-[#ababab] border-b-[#217346] bg-[#d2d2d2] text-[#217346]' : 'border-r-[#ababab] border-b-[#999] bg-[#e6e6e6] text-[#222]'}">${String.fromCharCode(65 + i)}</th>`;
});
html += '</tr></thead><tbody>';
for (let r = 1; r <= 37; r++) {
  html += `<tr><th class="h-5 border-r border-b border-r-[#999] border-b-[#c6c6c6] p-0 font-normal ${r === 1 ? 'bg-[#d2d2d2] text-[#217346]' : 'bg-[#e6e6e6] text-[#222]'}"><div class="h-[19px] leading-[21px]">${r}</div></th>`;
  for (let c = 0; c < 19; c++) {
    const v = r === 1 ? names[c] : (rows[r - 2] || [])[c] || '';
    const right = r > 1 && c < 12;
    const mark = r === 1 && c === 0 ? '<span class="absolute -inset-x-0.5 -inset-y-0.5 border-2 border-[#217346]"></span><span class="absolute -right-[3px] -bottom-[3px] z-10 size-[5px] bg-[#217346] outline-1 outline-white"></span>' : '';
    html += `<td class="relative h-5 border-r border-b border-[#d4d4d4] p-0"><div class="h-[19px] overflow-hidden px-0.5 leading-[21px] whitespace-nowrap ${right ? 'text-right' : 'text-left'} ${r === 1 ? 'text-[13px]' : 'text-xs'} leading-[21px]">${v}</div>${mark}</td>`;
  }
  html += '</tr>';
}
document.getElementById('sheet').innerHTML = html + '</tbody>';
</script>
</body>
</html>
